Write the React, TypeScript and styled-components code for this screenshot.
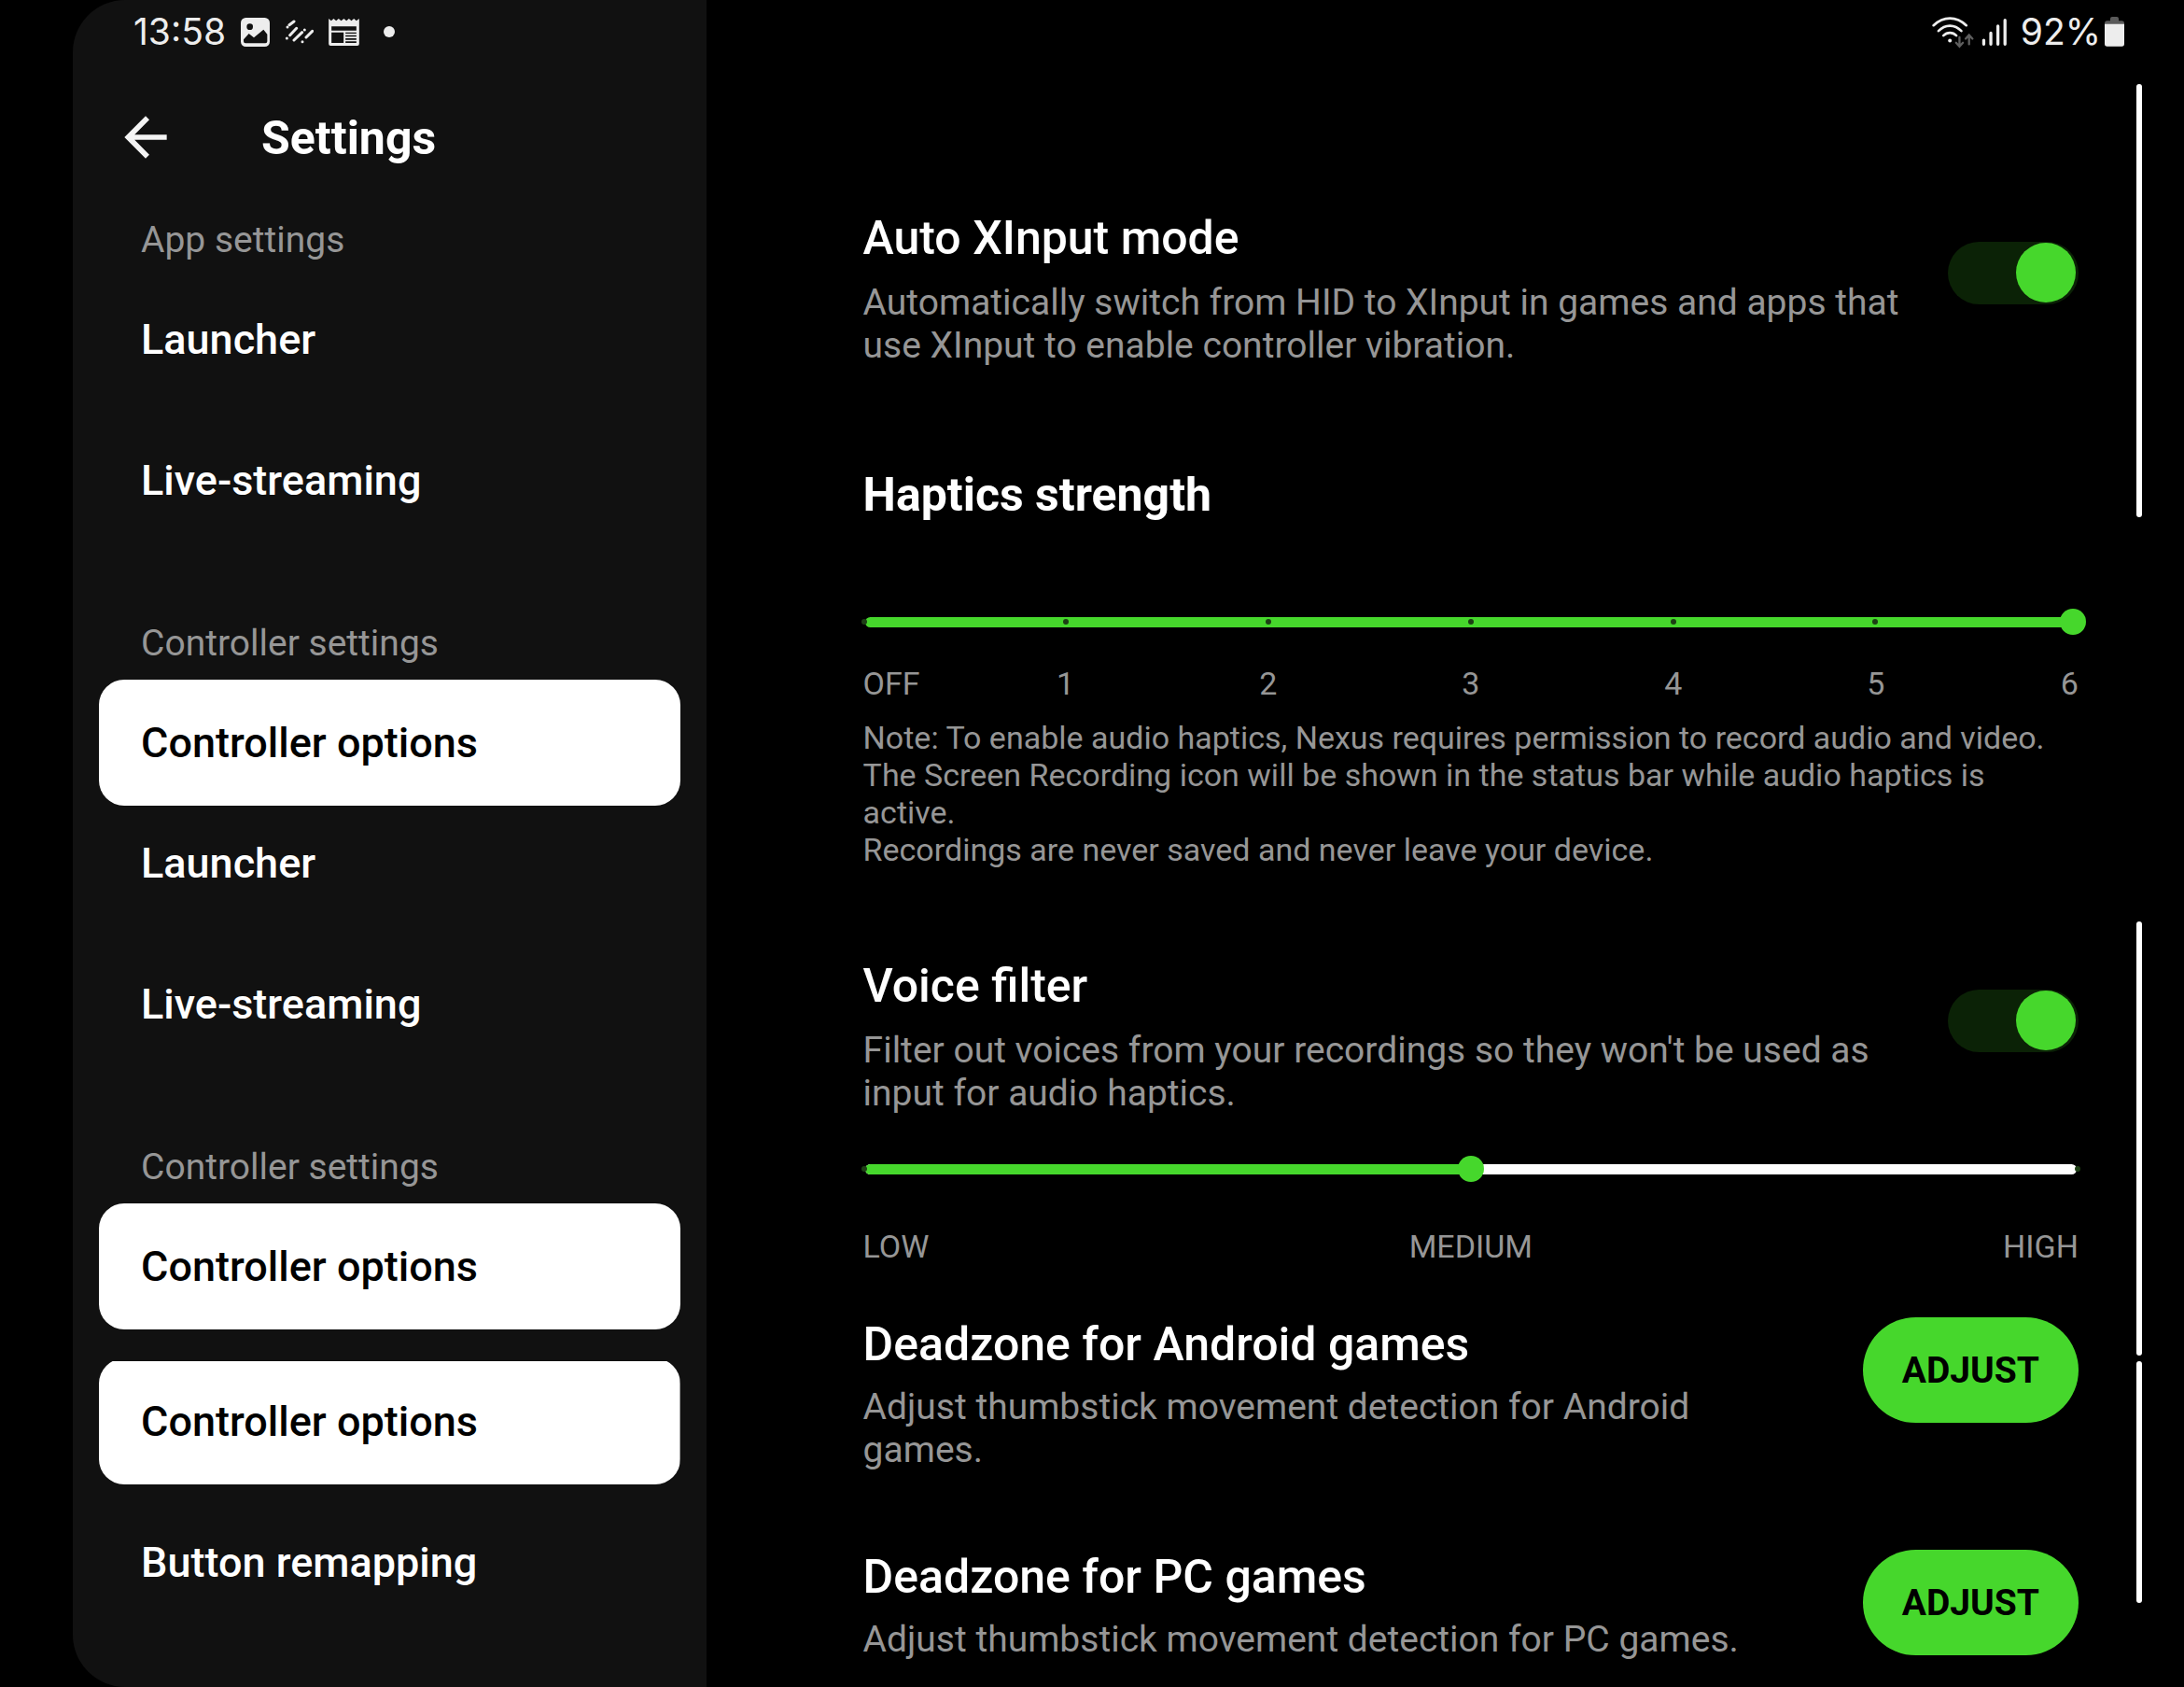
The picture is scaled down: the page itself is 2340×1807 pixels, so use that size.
import React, { useId, useState } from 'react';
import styled, { createGlobalStyle } from 'styled-components';

const GREEN = '#46d72c';
const MUTED = '#969696';

const GlobalStyle = createGlobalStyle`
  *, *::before, *::after { box-sizing: border-box; }
  body {
    margin: 0;
    background: #000;
    color: #fff;
    font-family: Roboto, "Liberation Sans", sans-serif;
  }
  h1, h2, p, ul { margin: 0; padding: 0; }
`;

const Screen = styled.div`
  display: grid;
  grid-template-columns: minmax(0, 3fr) minmax(0, 7fr);
  min-height: 100vh;
  padding-left: 78px;
`;

const Sidebar = styled.aside`
  display: flex;
  flex-direction: column;
  background: #111;
  border-radius: 56px 0 0 56px;
`;

const Main = styled.main`
  display: flex;
  flex-direction: column;
`;

const StatusBar = styled.div<{ $end?: boolean }>`
  display: flex;
  align-items: center;
  justify-content: ${(p) => (p.$end ? 'flex-end' : 'flex-start')};
  gap: ${(p) => (p.$end ? 4 : 16)}px;
  height: 68px;
  padding: ${(p) => (p.$end ? '0 64px 0 0' : '0 0 0 65px')};
  color: #ededed;
`;

const Connectivity = styled.div`
  display: flex;
  align-items: center;
  gap: 8px;
  margin-right: 10px;
`;

const StatusText = styled.span`
  font: 400 39px/46px Inter, sans-serif;
`;

const StatusDot = styled.span`
  width: 12px;
  height: 12px;
  margin-left: 10px;
  border-radius: 50%;
  background: currentColor;
`;

const Glyph = styled.svg`
  display: block;
  flex: none;
`;

const Header = styled.header`
  display: flex;
  align-items: center;
  gap: 90px;
  height: 157px;
  padding: 0 44px;
`;

const BackButton = styled.button`
  display: block;
  padding: 0;
  border: 0;
  background: none;
  color: #f4f4f4;
`;

const PageTitle = styled.h1`
  padding-top: 4px;
  font-size: 50px;
  line-height: 59px;
  font-weight: 700;
`;

const Nav = styled.nav`
  display: flex;
  flex-direction: column;
  padding: 9px 28px 0;
`;

const NavLabel = styled.h2<{ $gap?: number }>`
  margin-top: ${(p) => p.$gap ?? 0}px;
  padding: 0 45px 16px;
  color: ${MUTED};
  font-size: 39px;
  line-height: 46px;
  font-weight: 400;
`;

const NavItem = styled.a<{ $selected?: boolean; $gap?: number; $cut?: boolean }>`
  display: flex;
  align-items: center;
  height: ${(p) => (p.$selected ? 135 : 124)}px;
  margin-top: ${(p) => p.$gap ?? 0}px;
  padding: 0 45px;
  border-radius: 27px;
  background: ${(p) => (p.$selected ? '#fff' : 'transparent')};
  clip-path: ${(p) => (p.$cut ? 'inset(3px 0 0 0)' : 'none')};
  color: ${(p) => (p.$selected ? '#000' : '#fff')};
  font-size: 45px;
  line-height: 52px;
  font-weight: 500;
  text-decoration: none;
`;

const Body = styled.div`
  display: flex;
  padding-right: 45px;
`;

const Options = styled.div`
  flex: 1;
  min-width: 0;
  display: flex;
  flex-direction: column;
  padding: 158px 62px 24px 168px;
`;

const ScrollRail = styled.div`
  display: flex;
  flex-direction: column;
  flex: none;
  width: 6px;
  padding-top: 22px;
`;

const ScrollMark = styled.span<{ $length: number; $gap?: number }>`
  height: ${(p) => p.$length}px;
  margin-top: ${(p) => p.$gap ?? 0}px;
  border-radius: 3px;
  background: #fff;
`;

const Section = styled.section<{ $gap?: number }>`
  margin-top: ${(p) => p.$gap ?? 0}px;
`;

const OptionRow = styled.div<{ $gap: number }>`
  display: flex;
  align-items: flex-start;
  gap: ${(p) => p.$gap}px;
`;

const OptionText = styled.div<{ $gap: number }>`
  flex: 1;
  min-width: 0;
  display: flex;
  flex-direction: column;
  gap: ${(p) => p.$gap}px;
`;

const OptionTitle = styled.h2<{ $strong?: boolean }>`
  font-size: 50px;
  line-height: 59px;
  font-weight: ${(p) => (p.$strong ? 700 : 500)};
`;

const Description = styled.p`
  color: ${MUTED};
  font-size: 39px;
  line-height: 46px;
`;

const Note = styled.p`
  margin-top: 18px;
  padding-right: 30px;
  color: ${MUTED};
  font-size: 34px;
  line-height: 40px;
`;

const Switch = styled.input`
  appearance: none;
  flex: none;
  width: 140px;
  height: 67px;
  margin: 33px 0 0;
  padding: 1px 3px;
  display: flex;
  border-radius: 34px;
  background: #333;
  &::before {
    content: '';
    width: 64px;
    height: 64px;
    border-radius: 50%;
    background: #ccc;
  }
  &:checked {
    justify-content: flex-end;
    background: #0b2206;
  }
  &:checked::before {
    background: ${GREEN};
  }
`;

const AdjustButton = styled.button`
  flex: none;
  height: 113px;
  padding: 0 42px;
  border: 0;
  border-radius: 57px;
  background: ${GREEN};
  color: #000;
  font: 700 39px/46px Roboto, sans-serif;
`;

const SliderBox = styled.div<{ $gap: number }>`
  display: grid;
  align-items: center;
  height: 28px;
  margin-top: ${(p) => p.$gap}px;
  > * { grid-area: 1 / 1; }
`;

const Track = styled.div`
  height: 11px;
  margin: 0 2px;
  border-radius: 6px;
  background: #fff;
  overflow: hidden;
`;

const Fill = styled.div`
  height: 100%;
  background: ${GREEN};
`;

const Ticks = styled.div`
  display: flex;
  justify-content: space-between;
  margin: 0 -2px;
`;

const Tick = styled.span`
  width: 6px;
  height: 6px;
  border-radius: 50%;
  background: #1d3f15;
`;

const Range = styled.input`
  appearance: none;
  width: auto;
  height: 28px;
  margin: 0 -8px;
  background: transparent;
  &::-webkit-slider-thumb {
    appearance: none;
    width: 28px;
    height: 28px;
    border: 0;
    border-radius: 50%;
    background: ${GREEN};
  }
`;

const Scale = styled.div<{ $gap: number }>`
  display: flex;
  justify-content: space-between;
  margin-top: ${(p) => p.$gap}px;
  color: ${MUTED};
  font-size: 34px;
  line-height: 40px;
`;

const ScaleLabel = styled.span`
  display: flex;
  justify-content: center;
  width: 0;
  white-space: nowrap;
  &:first-child { justify-content: flex-start; }
  &:last-child { justify-content: flex-end; }
`;

interface SliderProps {
  label: string;
  stops: string[];
  initial: number;
  gap: number;
  scaleGap: number;
}

function Slider({ label, stops, initial, gap, scaleGap }: SliderProps) {
  const [value, setValue] = useState(initial);
  const last = stops.length - 1;
  return (
    <>
      <SliderBox $gap={gap}>
        <Track>
          <Fill style={{ width: `${(value / last) * 100}%` }} />
        </Track>
        <Ticks>
          {stops.map((stop) => (
            <Tick key={stop} />
          ))}
        </Ticks>
        <Range
          type="range"
          aria-label={label}
          min={0}
          max={last}
          step={1}
          value={value}
          onChange={(e) => setValue(Number(e.target.value))}
        />
      </SliderBox>
      <Scale $gap={scaleGap}>
        {stops.map((stop) => (
          <ScaleLabel key={stop}>{stop}</ScaleLabel>
        ))}
      </Scale>
    </>
  );
}

function SwitchOption({ title, description }: { title: string; description: string }) {
  const id = useId();
  const [on, setOn] = useState(true);
  return (
    <OptionRow $gap={45}>
      <OptionText $gap={16}>
        <OptionTitle>
          <label htmlFor={id}>{title}</label>
        </OptionTitle>
        <Description>{description}</Description>
      </OptionText>
      <Switch id={id} type="checkbox" role="switch" checked={on} onChange={(e) => setOn(e.target.checked)} />
    </OptionRow>
  );
}

function AdjustOption({ title, description }: { title: string; description: string }) {
  return (
    <OptionRow $gap={100}>
      <OptionText $gap={14}>
        <OptionTitle>{title}</OptionTitle>
        <Description>{description}</Description>
      </OptionText>
      <AdjustButton type="button">ADJUST</AdjustButton>
    </OptionRow>
  );
}

const PictureIcon = () => (
  <Glyph width="31" height="31" viewBox="0 0 93 93" aria-hidden="true">
    <rect width="93" height="93" rx="16" fill="#ededed" />
    <circle cx="29" cy="29" r="10" fill="#111" />
    <path d="M9 70 26 51l16 13 31-26 12 15v23q0 6-6 6H15q-6 0-6-6z" fill="#111" />
  </Glyph>
);

const StreaksIcon = () => (
  <Glyph width="31" height="26" viewBox="0 0 93 78" aria-hidden="true">
    <path
      d="M9 24v.1M15 17 30 6M17 50 38 28M7 60v.1M30 66 56 41M64 33v.1M57 71v.1M69 57 89 37"
      fill="none"
      stroke="#ededed"
      strokeWidth="9"
      strokeLinecap="round"
    />
  </Glyph>
);

const NewsIcon = () => (
  <Glyph width="33" height="29" viewBox="0 0 98 87" aria-hidden="true">
    <path
      d="M0 0 8 7l8-7 8 7 8-7 8 7 9-7 8 7 8-7 8 7 8-7 8 7 9-7v81q0 6-6 6H6q-6 0-6-6z"
      fill="#ededed"
    />
    <path d="M9 25h80v13H9zM9 44h39v34H9zM54 44h35v4H54zM54 53h35v5H54zM54 63h35v5H54zM54 73h35v5H54z" fill="#111" />
  </Glyph>
);

const WifiIcon = () => (
  <Glyph width="45" height="35" viewBox="28 48 136 104" aria-hidden="true">
    <g fill="none" stroke="#ededed" strokeWidth="8" strokeLinecap="round">
      <path d="M33 78Q57 55 86 55t53 23" />
      <path d="M49 96q16-17 37-17t37 17" />
      <path d="M65 111q9-9 21-9t21 9" />
    </g>
    <circle cx="86" cy="127" r="6" fill="#ededed" />
    <path
      d="M117 116v29m-11-11 11 12 11-12M148 139v-29m-11 11 11-12 11 12"
      fill="none"
      stroke="#5e5e5e"
      strokeWidth="7"
      strokeLinecap="round"
    />
  </Glyph>
);

const SignalIcon = () => (
  <Glyph width="28" height="31" viewBox="191 54 84 94" aria-hidden="true">
    <path
      d="M198 127v13M221 104v36M244 81v59M267 62v78"
      stroke="#ededed"
      strokeWidth="10"
      strokeLinecap="round"
    />
  </Glyph>
);

const BatteryIcon = () => (
  <Glyph width="21" height="32" viewBox="0 0 63 96" aria-hidden="true">
    <path d="M18 13V6q0-6 6-6h15q6 0 6 6v7h10q8 0 8 8v6H0v-6q0-8 8-8z" fill="#5a5a5a" />
    <path d="M0 23h63v64q0 8-8 8H8q-8 0-8-8z" fill="#ededed" />
  </Glyph>
);

const BackIcon = () => (
  <Glyph width="68" height="68" viewBox="0 0 24 24" aria-hidden="true">
    <path d="M20 11H7.83l5.59-5.59L12 4l-8 8 8 8 1.41-1.41L7.83 13H20v-2z" fill="currentColor" />
  </Glyph>
);

export default function App() {
  return (
    <>
      <GlobalStyle />
      <Screen>
        <Sidebar>
          <StatusBar>
            <StatusText>13:58</StatusText>
            <PictureIcon />
            <StreaksIcon />
            <NewsIcon />
            <StatusDot />
          </StatusBar>
          <Header>
            <BackButton type="button" aria-label="Back">
              <BackIcon />
            </BackButton>
            <PageTitle>Settings</PageTitle>
          </Header>
          <Nav>
            <NavLabel>App settings</NavLabel>
            <NavItem href="#launcher" $gap={6}>Launcher</NavItem>
            <NavItem href="#live-streaming" $gap={27}>Live-streaming</NavItem>

            <NavLabel $gap={89}>Controller settings</NavLabel>
            <NavItem href="#controller-options" $selected>Controller options</NavItem>
            <NavItem href="#launcher">Launcher</NavItem>
            <NavItem href="#live-streaming" $gap={27}>Live-streaming</NavItem>

            <NavLabel $gap={89}>Controller settings</NavLabel>
            <NavItem href="#controller-options" $selected>Controller options</NavItem>
            <NavItem href="#controller-options" $selected $cut $gap={31}>Controller options</NavItem>
            <NavItem href="#button-remapping" $gap={22}>Button remapping</NavItem>
          </Nav>
        </Sidebar>
        <Main>
          <StatusBar $end>
            <Connectivity>
              <WifiIcon />
              <SignalIcon />
            </Connectivity>
            <StatusText>92%</StatusText>
            <BatteryIcon />
          </StatusBar>
          <Body>
            <Options>
              <Section>
                <SwitchOption
                  title="Auto XInput mode"
                  description="Automatically switch from HID to XInput in games and apps that use XInput to enable controller vibration."
                />
              </Section>
              <Section $gap={108}>
                <OptionTitle $strong>Haptics strength</OptionTitle>
                <Slider
                  label="Haptics strength"
                  stops={['OFF', '1', '2', '3', '4', '5', '6']}
                  initial={6}
                  gap={92}
                  scaleGap={32}
                />
                <Note>
                  Note: To enable audio haptics, Nexus requires permission to record audio and video. The Screen
                  Recording icon will be shown in the status bar while audio haptics is active.
                  <br />
                  Recordings are never saved and never leave your device.
                </Note>
              </Section>
              <Section $gap={97}>
                <SwitchOption
                  title="Voice filter"
                  description="Filter out voices from your recordings so they won't be used as input for audio haptics."
                />
                <Slider label="Voice filter level" stops={['LOW', 'MEDIUM', 'HIGH']} initial={1} gap={44} scaleGap={49} />
              </Section>
              <Section $gap={56}>
                <AdjustOption
                  title="Deadzone for Android games"
                  description="Adjust thumbstick movement detection for Android games."
                />
              </Section>
              <Section $gap={84}>
                <AdjustOption
                  title="Deadzone for PC games"
                  description="Adjust thumbstick movement detection for PC games."
                />
              </Section>
            </Options>
            <ScrollRail aria-hidden="true">
              <ScrollMark $length={464} />
              <ScrollMark $length={465} $gap={433} />
              <ScrollMark $length={259} $gap={6} />
            </ScrollRail>
          </Body>
        </Main>
      </Screen>
    </>
  );
}
